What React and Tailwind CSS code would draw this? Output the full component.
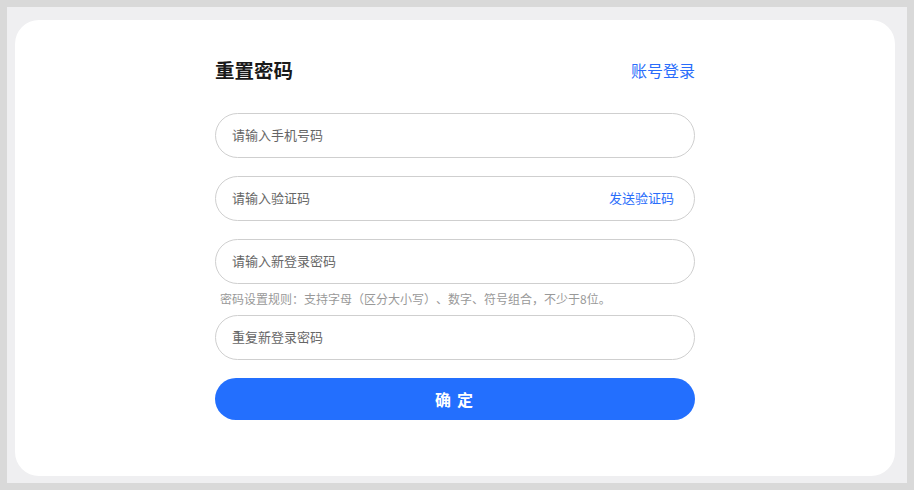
import React, { useState } from "react";

const FONT = { fontFamily: '"Noto Sans CJK SC", "Noto Sans", sans-serif' };

function Field({ placeholder, value, onChange, type = "text", children }) {
  return (
    <div className="flex items-center h-[45px] rounded-full border border-[#cfcfcf] pl-[16px] pr-[20px]">
      <input
        type={type}
        value={value}
        onChange={onChange}
        placeholder={placeholder}
        className="flex-1 bg-transparent outline-none text-[13px] leading-[18px] pb-[2px] text-[#333] placeholder:text-[#666]"
      />
      {children}
    </div>
  );
}

export default function App() {
  const [form, setForm] = useState({ phone: "", code: "", pwd: "", pwd2: "" });
  const set = (k) => (e) => setForm({ ...form, [k]: e.target.value });

  return (
    <div className="h-[490px] bg-[#d9d9d9] p-[7px]" style={FONT}>
      <div className="h-full bg-[#efeff1] pt-[13px] pl-[8px] pr-[12px] pb-[7px]">
        <div className="h-full bg-white rounded-[24px] flex justify-center">
          <div className="w-[480px] pt-[36px]">
            {/* 标题 */}
            <div className="flex items-center justify-between h-[28px]">
              <h1 className="text-[19.5px] font-bold text-[#1a1a1a]">重置密码</h1>
              <a href="#" className="text-[16px] text-[#2a6dfb]">账号登录</a>
            </div>

            <form className="mt-[29px]" onSubmit={(e) => e.preventDefault()}>
              <Field placeholder="请输入手机号码" value={form.phone} onChange={set("phone")} />
              <div className="mt-[18px]">
                <Field placeholder="请输入验证码" value={form.code} onChange={set("code")}>
                  <button type="button" className="text-[13px] text-[#2a6dfb] pb-[2px]">发送验证码</button>
                </Field>
              </div>
              <div className="mt-[18px]">
                <Field placeholder="请输入新登录密码" type="password" value={form.pwd} onChange={set("pwd")} />
              </div>
              <p className="h-[31px] flex items-center pl-[5px] pb-[2px] text-[12px] text-[#999] [text-spacing-trim:space-all]">
                密码设置规则：支持字母（区分大小写）、数字、符号组合，不少于8位。
              </p>
              <Field placeholder="重复新登录密码" type="password" value={form.pwd2} onChange={set("pwd2")} />
              <button
                type="submit"
                className="mt-[18px] w-full h-[42px] rounded-full bg-[#236ffe] text-white text-[16px] font-bold tracking-[6px] pl-[4px]"
              >
                确定
              </button>
            </form>
          </div>
        </div>
      </div>
    </div>
  );
}
